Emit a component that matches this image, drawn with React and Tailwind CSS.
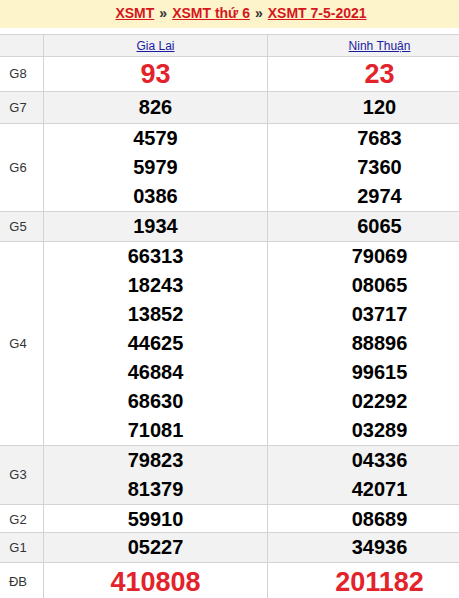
const rows = [
  { label: 'G8', h: 'h-[35px]', gray: false, big: true, a: ['93'], b: ['23'] },
  { label: 'G7', h: 'h-[32px]', gray: true, a: ['826'], b: ['120'] },
  { label: 'G6', h: 'h-[88px]', gray: false, a: ['4579', '5979', '0386'], b: ['7683', '7360', '2974'] },
  { label: 'G5', h: 'h-[30px]', gray: true, a: ['1934'], b: ['6065'] },
  {
    label: 'G4',
    h: 'h-[204px]',
    gray: false,
    a: ['66313', '18243', '13852', '44625', '46884', '68630', '71081'],
    b: ['79069', '08065', '03717', '88896', '99615', '02292', '03289'],
  },
  { label: 'G3', h: 'h-[59px]', gray: true, a: ['79823', '81379'], b: ['04336', '42071'] },
  { label: 'G2', h: 'h-[28px]', gray: false, a: ['59910'], b: ['08689'] },
  { label: 'G1', h: 'h-[30px]', gray: true, a: ['05227'], b: ['34936'] },
  { label: 'ĐB', h: 'h-[38px]', gray: false, big: true, a: ['410808'], b: ['201182'] },
];

function Cell({ nums, big }) {
  return (
    <div className="flex flex-col items-center justify-center border-l border-[#d3d3d3]">
      {nums.map((n) => (
        <div
          key={n}
          className={
            big
              ? 'text-[27px] leading-[30px] font-bold text-[#e3232b]'
              : 'text-[20px] leading-[29px] font-bold text-black'
          }
        >
          {n}
        </div>
      ))}
    </div>
  );
}

function App() {
  return (
    <div className="w-[459px] h-[598px] overflow-hidden bg-white font-['Liberation_Sans',Arial,sans-serif]">
      <div className="w-[491px]">
        <div className="h-[28px] w-[482px] bg-[#fef4cc] flex items-center justify-center text-[14px] font-bold pb-[1px]">
          <a className="text-[#d4171c] underline">XSMT</a>
          <span className="mx-[5px] text-[#333]">»</span>
          <a className="text-[#d4171c] underline">XSMT thứ 6</a>
          <span className="mx-[5px] text-[#333]">»</span>
          <a className="text-[#d4171c] underline">XSMT 7-5-2021</a>
        </div>

        <div className="mt-[6px] border-t border-[#d3d3d3]">
          <div className="grid grid-cols-[43px_224px_224px] h-[22px] bg-[#f2f2f2] border-b border-[#d3d3d3] text-[12px]">
            <div />
            <div className="flex items-center justify-center border-l border-[#d3d3d3]">
              <a className="text-[#1a1aa0] underline">Gia Lai</a>
            </div>
            <div className="flex items-center justify-center border-l border-[#d3d3d3]">
              <a className="text-[#1a1aa0] underline">Ninh Thuận</a>
            </div>
          </div>

          {rows.map((r) => (
            <div
              key={r.label}
              className={`grid grid-cols-[43px_224px_224px] border-b border-[#d3d3d3] ${r.h} ${
                r.gray ? 'bg-[#f2f2f2]' : 'bg-white'
              }`}
            >
              <div className="flex items-center justify-center pr-[7px] text-[13px] text-[#333]">{r.label}</div>
              <Cell nums={r.a} big={r.big} />
              <Cell nums={r.b} big={r.big} />
            </div>
          ))}
        </div>
      </div>
    </div>
  );
}

export default App;
